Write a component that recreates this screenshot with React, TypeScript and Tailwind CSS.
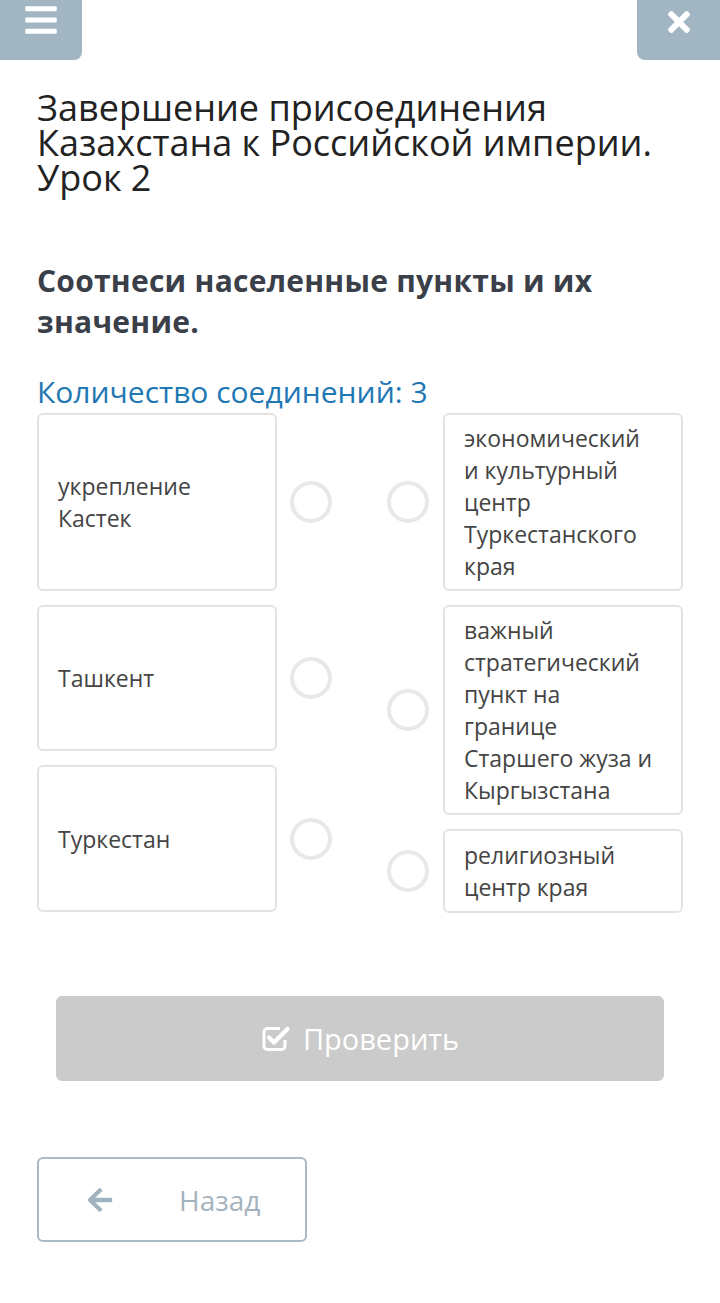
import { FaArrowLeft, FaBars, FaTimes } from "react-icons/fa";

const left = [
  { text: "укрепление Кастек", h: "h-[178px]" },
  { text: "Ташкент", h: "h-[146px]" },
  { text: "Туркестан", h: "h-[147px]" },
];

const right = [
  { text: "экономический и культурный центр Туркестанского края", h: "h-[178px]" },
  { text: "важный стратегический пункт на границе Старшего жуза и Кыргызстана", h: "h-[210px]" },
  { text: "религиозный центр края", h: "h-[84px]" },
];

function Dot() {
  return <div className="size-[42px] shrink-0 rounded-full border-[4px] border-[#e6e8ea] bg-white" />;
}

function CheckSquare() {
  return (
    <svg viewBox="0 0 30 28" className="h-[28px] w-[30px]" fill="none" stroke="currentColor">
      <path d="M19 3.5H6.5a3.5 3.5 0 0 0-3.5 3.5v14a3.5 3.5 0 0 0 3.5 3.5h14a3.5 3.5 0 0 0 3.5-3.5v-6" strokeWidth="3" />
      <path d="M8 12.5l5 5L26.5 4" strokeWidth="4.2" strokeLinecap="round" strokeLinejoin="round" />
    </svg>
  );
}

export default function App() {
  return (
    <div className="min-h-[1303px] bg-white font-['Open_Sans',sans-serif] text-[#444]">
      <div className="flex justify-between">
        <button className="flex h-[60px] w-[82px] items-start justify-center rounded-br-[8px] bg-[#a1b5c3] pt-[2px] text-white">
          <FaBars className="h-[36px] w-[38px]" />
        </button>
        <button className="flex h-[60px] w-[83px] items-start justify-center rounded-bl-[8px] bg-[#a1b5c3] pt-[6px] text-white">
          <FaTimes className="h-[32px] w-[30px]" />
        </button>
      </div>

      <div className="px-[37px]">
        <h1 className="mt-[30px] text-[36px] leading-[35px] text-[#222]">
          Завершение присоединения Казахстана к Российской империи. Урок 2
        </h1>

        <h2 className="mt-[65px] text-[30px] font-bold leading-[41px] tracking-[0.25px] text-[#3a3f49]">
          Соотнеси населенные пункты и их значение.
        </h2>

        <p className="mt-[32px] text-[30px] leading-[36px] text-[#1f77b4]">Количество соединений: 3</p>

        <div className="mt-[3px] flex justify-between">
          <div className="flex flex-col gap-[14px]">
            {left.map((item) => (
              <div key={item.text} className="flex items-center gap-[13px]">
                <div
                  className={`flex w-[240px] items-center rounded-[6px] border-2 border-[#e3e3e3] pl-[19px] pr-[24px] text-[23px] leading-[32px] ${item.h}`}
                >
                  {item.text}
                </div>
                <Dot />
              </div>
            ))}
          </div>
          <div className="flex flex-col gap-[14px]">
            {right.map((item) => (
              <div key={item.text} className="flex items-center gap-[14px]">
                <Dot />
                <div
                  className={`flex w-[240px] items-center rounded-[6px] border-2 border-[#e3e3e3] pl-[19px] pr-[24px] text-[23px] leading-[32px] ${item.h}`}
                >
                  {item.text}
                </div>
              </div>
            ))}
          </div>
        </div>

        <div className="mt-[83px] px-[19px]">
          <button className="flex h-[85px] w-full items-center justify-center gap-[12px] rounded-[6px] bg-[#cbcbcb] text-[29px] text-white">
            <CheckSquare />
            Проверить
          </button>
        </div>

        <button className="mt-[76px] flex h-[85px] w-[270px] items-center rounded-[6px] border-2 border-[#a9bbc6] pl-[47px] text-[28px] text-[#a4b3bd]">
          <FaArrowLeft className="size-[28px] text-[#9fb3c1]" />
          <span className="ml-[65px]">Назад</span>
        </button>
      </div>
    </div>
  );
}
